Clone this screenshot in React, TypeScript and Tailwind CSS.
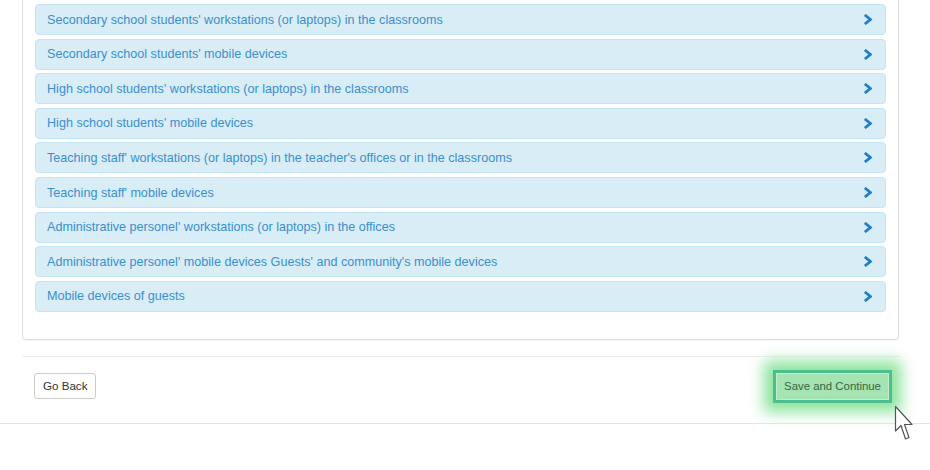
import React from "react";

const rows = [
  "Secondary school students' workstations (or laptops) in the classrooms",
  "Secondary school students' mobile devices",
  "High school students' workstations (or laptops) in the classrooms",
  "High school students' mobile devices",
  "Teaching staff' workstations (or laptops) in the teacher's offices or in the classrooms",
  "Teaching staff' mobile devices",
  "Administrative personel' workstations (or laptops) in the offices",
  "Administrative personel' mobile devices Guests' and community's mobile devices",
  "Mobile devices of guests",
];

function Chevron() {
  return (
    <svg width="9" height="11" viewBox="0 0 9 11" className="shrink-0">
      <path d="M1.8 1 L7.4 5.5 L1.8 10" fill="none" stroke="#1b7fcc" strokeWidth="2.8" strokeLinejoin="miter" />
    </svg>
  );
}

function Cursor() {
  return (
    <svg width="20" height="40" viewBox="0 0 20 40" className="absolute left-[894px] top-[405px]">
      <path
        d="M1.5 1.5 L1.5 26 L7 20.5 L11.5 34 L15 32.5 L10.5 19.5 L18 19.5 Z"
        fill="#ffffff"
        stroke="#555"
        strokeWidth="1.2"
        strokeLinejoin="round"
      />
    </svg>
  );
}

export default function App() {
  return (
    <div className="relative w-[930px] h-[470px] bg-white overflow-hidden" style={{ fontFamily: '"Liberation Sans", Arial, sans-serif' }}>
      <div className="mx-[22px] w-[877px] -mt-[10px] border border-[#dddddd] rounded-b-[4px] shadow-[0_1px_1px_rgba(0,0,0,0.05)] pt-[13px] pb-[27px] px-[12px]">
        <div className="flex flex-col gap-[3.6px]">
          {rows.map((r) => (
            <div
              key={r}
              className="h-[31px] flex items-center justify-between bg-[#d9edf7] border border-[#c4e6f3] rounded-[4px] pl-[11px] pr-[13px]"
            >
              <span className="text-[12.6px] text-[#3a8fd0] pt-[1px]">{r}</span>
              <Chevron />
            </div>
          ))}
        </div>
      </div>
      <div className="mx-[22px] w-[877px] mt-[16px] border-t border-[#eeeeee] flex items-start justify-between pl-[12px] pr-[7px] h-[67px]">
        <button className="mt-[16px] h-[26px] px-[8px] text-[11.6px] text-[#333] bg-white border border-[#cccccc] rounded-[3px]">
          Go Back
        </button>
        <button className="mt-[13px] h-[33px] w-[119px] text-[11.4px] text-[#2e6a3f] bg-[#a6e3b3] border-[3px] border-[#4cbf90] shadow-[0_0_14px_9px_rgba(110,220,130,0.8)] flex items-center justify-center">
          <span className="w-full h-full flex items-center justify-center border border-[#c3eccb]">Save and Continue</span>
        </button>
      </div>
      <div className="border-t border-[#e6e6e6]" />
      <Cursor />
    </div>
  );
}
